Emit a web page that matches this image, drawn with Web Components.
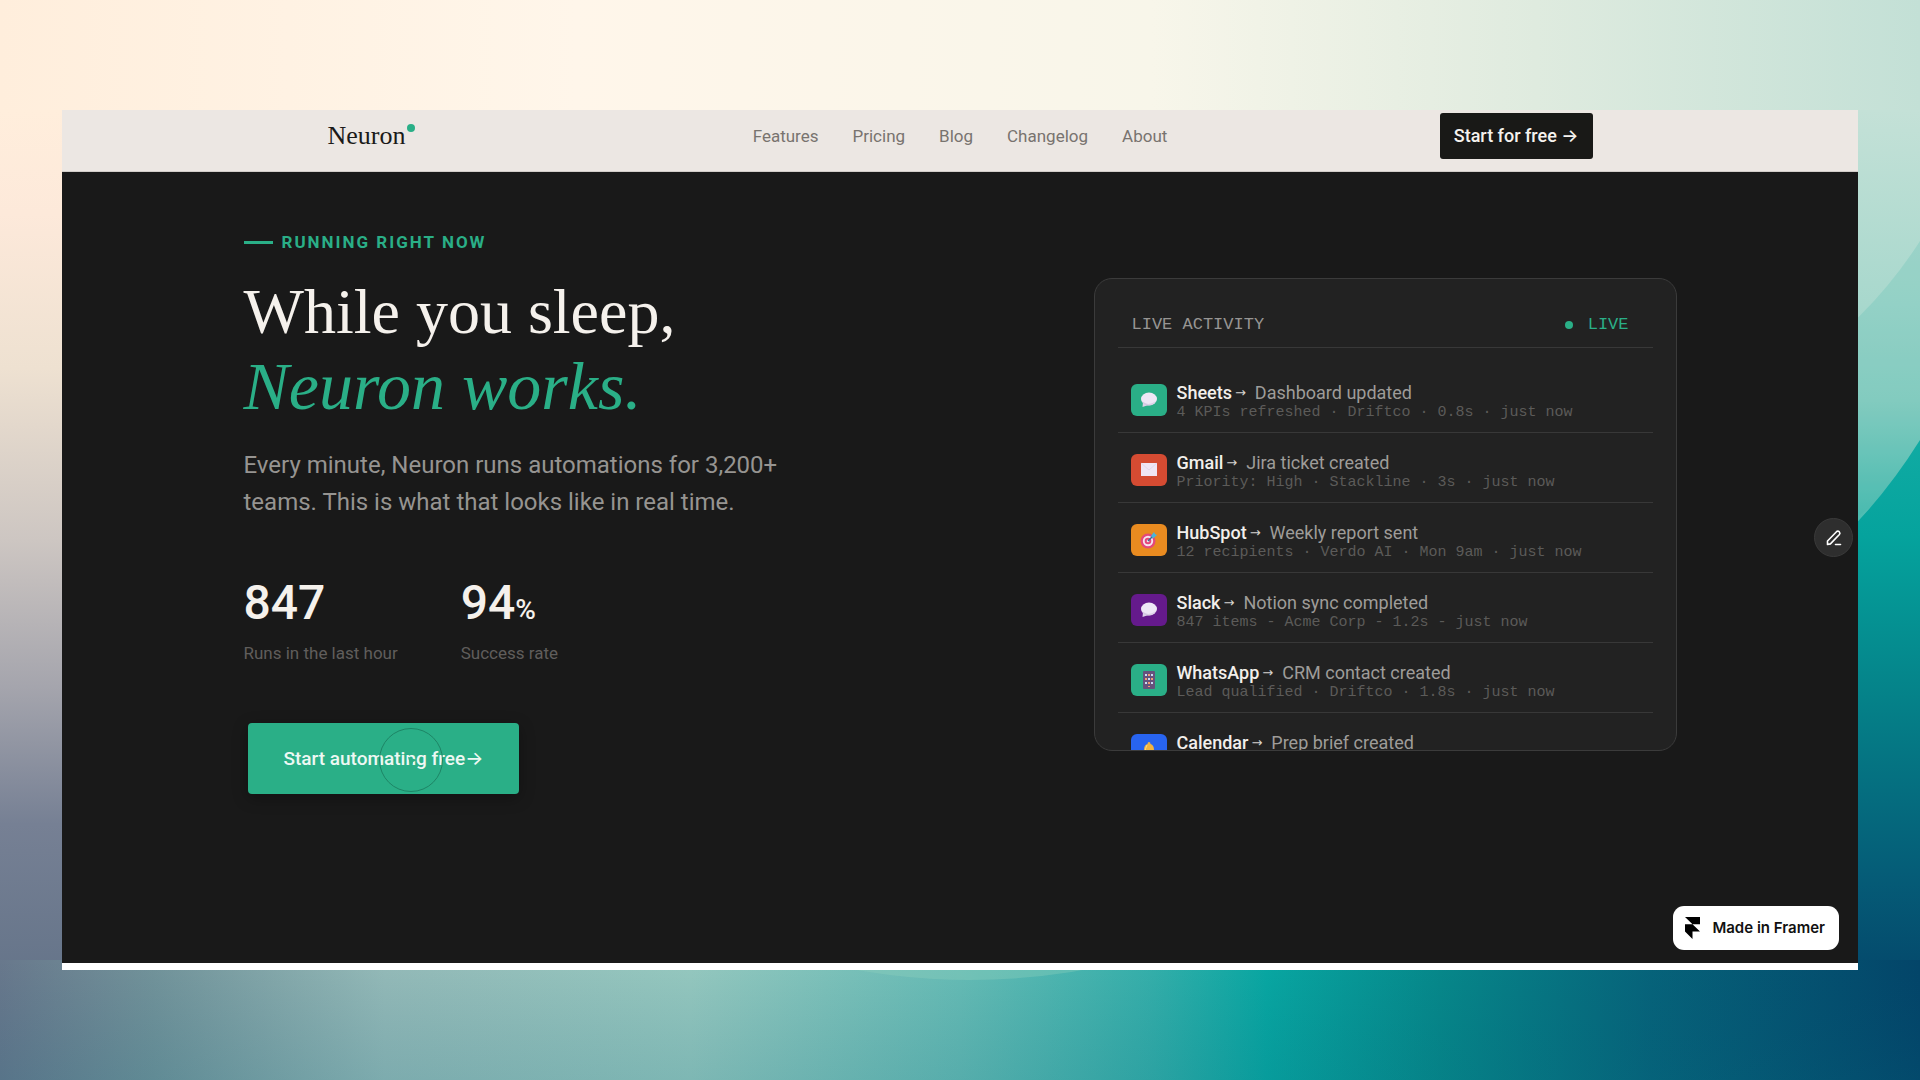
<!DOCTYPE html>
<html lang="en">
<head>
<meta charset="utf-8">
<meta name="viewport" content="width=device-width, initial-scale=1">
<title>Neuron</title>
<style>
  :root{ --ink:#191919; --paper:#ece7e3; --green:#2aaf87; --line:#383838; --sans:Roboto, Inter, sans-serif; --serif:"Liberation Serif", serif; --mono:"Liberation Mono", monospace; }
  body{ margin:0; font-family:var(--sans); }
</style>
</head>
<body>
<nr-stage>
  <nr-nav>
    <a href="#features">Features</a>
    <a href="#pricing">Pricing</a>
    <a href="#blog">Blog</a>
    <a href="#changelog">Changelog</a>
    <a href="#about">About</a>
    <button slot="action" type="button">Start for free →</button>
  </nr-nav>
  <nr-hero>
    <nr-pitch>
      <span slot="eyebrow">RUNNING RIGHT NOW</span>
      <span slot="title">While you sleep,</span>
      <em slot="title">Neuron works.</em>
      <span slot="lead">Every minute, Neuron runs automations for 3,200+ teams. This is what that looks like in real time.</span>
      <nr-stat slot="stats" value="847" label="Runs in the last hour"></nr-stat>
      <nr-stat slot="stats" value="94" unit="%" label="Success rate"></nr-stat>
      <nr-cta slot="action">Start automating free→</nr-cta>
    </nr-pitch>
    <nr-activity>
      <nr-run app="Sheets" action="Dashboard updated" icon="chat" style="--tile:#2aaf87">4 KPIs refreshed · Driftco · 0.8s · just now</nr-run>
      <nr-run app="Gmail" action="Jira ticket created" icon="mail" style="--tile:#d54b32">Priority: High · Stackline · 3s · just now</nr-run>
      <nr-run app="HubSpot" action="Weekly report sent" icon="target" style="--tile:#e98b20">12 recipients · Verdo AI · Mon 9am · just now</nr-run>
      <nr-run app="Slack" action="Notion sync completed" icon="chat" style="--tile:#651a8c">847 items - Acme Corp - 1.2s - just now</nr-run>
      <nr-run app="WhatsApp" action="CRM contact created" icon="phone" style="--tile:#2aaf87">Lead qualified · Driftco · 1.8s · just now</nr-run>
      <nr-run app="Calendar" action="Prep brief created" icon="bell" style="--tile:#2864f0"></nr-run>
    </nr-activity>
  </nr-hero>
  <nr-edit slot="overlay"></nr-edit>
  <nr-badge slot="overlay">Made in Framer</nr-badge>
</nr-stage>

<script>
const define = (name, html) => customElements.define(name, class extends HTMLElement {
  constructor(){
    super();
    this.attachShadow({ mode: 'open' }).innerHTML = typeof html === 'function' ? html(this) : html;
  }
});

// wallpaper plus the framed page
define('nr-stage', `
  <style>
    :host{ display:flex; box-sizing:border-box; min-height:100vh; padding:110px 62px; position:relative; isolation:isolate; }
    .wall{ position:absolute; inset:0; width:100%; height:100%; z-index:-1; }
    main{ flex:1; display:flex; flex-direction:column; position:relative; background:var(--ink); border-bottom:7px solid #fff; min-width:0; }
    ::slotted(nr-hero){ flex:1; }
  </style>
  <svg class="wall" viewBox="0 0 1920 1080" preserveAspectRatio="none" aria-hidden="true">
    <defs>
      <linearGradient id="top"><stop offset="0" stop-color="#ffeedc"/><stop offset=".3" stop-color="#fff6ea"/><stop offset=".6" stop-color="#f8f6ea"/><stop offset=".8" stop-color="#dfebdf"/><stop offset="1" stop-color="#c3e0d6"/></linearGradient>
      <linearGradient id="left" x1="0" y1="0" x2="0" y2="1"><stop offset="0" stop-color="#ffeedc"/><stop offset=".12" stop-color="#fde9da"/><stop offset=".3" stop-color="#eee1d1"/><stop offset=".5" stop-color="#cdc6c2"/><stop offset=".67" stop-color="#a5a5ad"/><stop offset=".83" stop-color="#768094"/><stop offset="1" stop-color="#66758a"/></linearGradient>
      <linearGradient id="right" x1="0" y1="0" x2="0" y2="1"><stop offset="0" stop-color="#c4e1d7"/><stop offset=".2" stop-color="#a8d8cd"/><stop offset=".3" stop-color="#93d1c5"/><stop offset=".42" stop-color="#4dbdb2"/><stop offset=".5" stop-color="#3fb8ae"/></linearGradient>
      <linearGradient id="deep" x1="0" y1="0" x2="0" y2="1"><stop offset="0" stop-color="#10aba3"/><stop offset=".15" stop-color="#05a39d"/><stop offset=".4" stop-color="#058289"/><stop offset=".68" stop-color="#055c77"/><stop offset=".82" stop-color="#044b6d"/><stop offset="1" stop-color="#03456a"/></linearGradient>
      <linearGradient id="bottom"><stop offset="0" stop-color="#68788c"/><stop offset=".08" stop-color="#72939a"/><stop offset=".2" stop-color="#94bab8"/><stop offset=".36" stop-color="#95c8bf"/><stop offset=".5" stop-color="#66bcb5"/><stop offset=".6" stop-color="#34afaa"/><stop offset=".66" stop-color="#08a7a2"/><stop offset=".75" stop-color="#06888a"/><stop offset=".86" stop-color="#06637a"/><stop offset="1" stop-color="#034569"/></linearGradient>
      <linearGradient id="shade" x1="0" y1="0" x2="0" y2="1"><stop offset="0" stop-color="#03456a" stop-opacity="0"/><stop offset="1" stop-color="#03607a" stop-opacity=".16"/></linearGradient>
    </defs>
    <rect width="1920" height="1080" fill="url(#top)"/>
    <rect y="110" width="100" height="860" fill="url(#left)"/>
    <rect x="1800" y="110" width="120" height="970" fill="url(#right)"/>
    <path d="M1800 365Q1872 316 1920 241V470L1800 560Z" fill="#35afa6" opacity=".18"/>
    <path d="M1800 575Q1870 520 1920 440V1080H1800Z" fill="url(#deep)"/>
    <rect y="960" width="1920" height="120" fill="url(#bottom)"/>
    <rect y="960" width="1920" height="120" fill="url(#shade)"/>
    <path d="M810 960Q970 1000 1130 960Z" fill="#8fd0bd" opacity=".35"/>
  </svg>
  <main><slot></slot><slot name="overlay"></slot></main>`);

define('nr-nav', `
  <style>
    :host{ display:block; background:var(--paper); border-bottom:1px solid #d2cdc9; }
    nav{ display:grid; grid-template-columns:1fr auto 1fr; align-items:center; width:calc(100% - 32px); max-width:1265px; margin:0 auto; padding:3px 0 12px; }
    .logo{ display:flex; align-items:flex-start; gap:2px; justify-self:start; color:#1b1a19; text-decoration:none; font:26px/30px var(--serif); }
    .logo i{ width:8px; height:8px; border-radius:50%; background:var(--green); margin-top:3px; }
    .links{ display:flex; gap:34px; }
    ::slotted(a){ color:#78736f; text-decoration:none; font-size:17px; line-height:24px; }
    ::slotted(button){ justify-self:end; height:46px; padding:0 14px; border:0; border-radius:3px; background:#191917; color:#f5f2ee; font:500 18px/24px var(--sans); cursor:pointer; }
  </style>
  <nav><a class="logo" href="#">Neuron<i></i></a><div class="links"><slot></slot></div><slot name="action"></slot></nav>`);

define('nr-hero', `
  <style>
    :host{ display:flex; justify-content:space-between; align-items:flex-start; box-sizing:border-box; width:calc(100% - 32px); max-width:1433px; margin:0 auto; padding:57px 0 48px; }
    ::slotted(nr-activity){ flex:0 1 583px; box-sizing:border-box; margin-top:49px; }
  </style>
  <slot></slot>`);

define('nr-pitch', `
  <style>
    :host{ display:block; }
    .eyebrow{ display:flex; align-items:center; gap:9px; margin:0; color:var(--green); font-size:17px; line-height:26px; font-weight:700; letter-spacing:2px; }
    .eyebrow::before{ content:""; width:29px; height:3px; background:currentColor; }
    h1{ display:flex; flex-direction:column; margin:20px 0 0; color:#f5f1ec; font:64px/74px var(--serif); }
    ::slotted(em){ color:var(--green); font-size:68px; font-style:italic; }
    .lead{ max-width:560px; margin:24px 0 0; color:#969491; font-size:24px; line-height:37px; }
    .stats{ display:flex; gap:63px; margin-top:54px; }
    .action{ margin:58px 0 0 4px; }
  </style>
  <p class="eyebrow"><slot name="eyebrow"></slot></p>
  <h1><slot name="title"></slot></h1>
  <p class="lead"><slot name="lead"></slot></p>
  <div class="stats"><slot name="stats"></slot></div>
  <div class="action"><slot name="action"></slot></div>`);

define('nr-stat', el => `
  <style>
    :host{ display:block; }
    .value{ margin:0; color:#f5f1ec; font-size:48px; line-height:56px; font-weight:500; }
    small{ font-size:28px; }
    .label{ margin:3px 0 0; color:#605e5c; font-size:17px; line-height:24px; }
  </style>
  <p class="value">${el.getAttribute('value')}<small>${el.getAttribute('unit') ?? ''}</small></p>
  <p class="label">${el.getAttribute('label')}</p>`);

// the ring is the pointer resting on the button
define('nr-cta', `
  <style>
    :host{ display:inline-block; }
    button{ position:relative; height:71px; padding:0 36px; border:0; border-radius:4px; background:var(--green); color:#edf8f3; box-shadow:0 4px 16px rgba(0,0,0,.3); font:500 19px/28px var(--sans); cursor:pointer; }
    svg{ position:absolute; left:130px; top:4px; }
  </style>
  <button type="button"><slot></slot>
    <svg width="66" height="66" viewBox="0 0 66 66" fill="none" aria-hidden="true"><circle cx="33" cy="33" r="31.5" stroke="#1e8566"/><path d="M30 30l9 3-4 2-2 5z" fill="#2aaf87"/></svg>
  </button>`);

define('nr-activity', `
  <style>
    :host{ display:block; max-height:473px; overflow:hidden; padding:0 23px; border:1px solid #3b3b3b; border-radius:18px; background:#222; }
    header{ display:flex; justify-content:space-between; padding:35px 24px 11px 14px; border-bottom:1px solid var(--line); margin-bottom:15px; font:17px/22px var(--mono); color:#979593; }
    h2{ margin:0; font:inherit; }
    .live{ display:flex; align-items:center; gap:15px; color:var(--green); }
    .live::before{ content:""; width:8px; height:8px; border-radius:50%; background:currentColor; }
  </style>
  <header><h2>LIVE ACTIVITY</h2><span class="live">LIVE</span></header>
  <slot></slot>`);

const icons = {
  chat: '<ellipse cx="9" cy="8" rx="8" ry="6.5" fill="#eee7f6"/><path d="M3 11l-.5 5 6-2z" fill="#ddd2e9"/><path d="M2 10q6 6 14 0-3 5-8 4.5-4 0-6-4.5z" fill="#cfc2dc" opacity=".6"/>',
  mail: '<path d="M1 2h16v13H1z" fill="#f0e5f4"/><path d="M1 2l8 7 8-7" fill="none" stroke="#e3d7ec"/>',
  target: '<circle cx="8" cy="10" r="7.5" fill="#e4487b"/><circle cx="8" cy="10" r="5.2" fill="#f5e5ef"/><circle cx="8" cy="10" r="3.3" fill="#e4487b"/><circle cx="8" cy="10" r="1.3" fill="#f5e5ef"/><path d="M8 10l6-6" stroke="#376b94" stroke-width="1.5"/><path d="M11 5l3-4 1 2 2 1-4 3.5z" fill="#46b5dc"/>',
  phone: '<rect x="3" y="0" width="12" height="18" rx="1" fill="#66517c"/><g fill="#c9dcf2"><path d="M5 3h2v2H5zM11 3h2v2h-2zM8 7h2v2H8zM5 11h2v2H5zM11 11h2v2h-2z"/></g><g fill="#f29a72"><path d="M8 3h2v2H8zM5 7h2v2H5zM11 7h2v2h-2zM8 11h2v2H8zM8 15h2v1H8z"/></g>',
  bell: '<path d="M9 1q1.5 0 1.5 2 3.5 1 3.5 6 0 4 3 6H1q3-2 3-6 0-5 3.5-6 0-2 1.5-2z" fill="#f4b43f"/><path d="M7 4q-2 3-2 9" stroke="#ffdb85" fill="none"/>'
};

define('nr-run', el => `
  <style>
    :host{ display:flex; gap:10px; box-sizing:border-box; height:70px; padding:21px 0 0 13px; border-bottom:1px solid var(--line); }
    .tile{ display:grid; place-items:center; flex:none; width:36px; height:32px; border-radius:6px; background:var(--tile); }
    p{ margin:0; white-space:nowrap; }
    .title{ display:flex; color:#9e9c99; font-size:18px; line-height:18px; }
    b{ color:#f2efeb; font-weight:500; }
    .title span{ margin:0 9px 0 3px; color:#d5d2cf; font:13px/18px "DejaVu Sans", sans-serif; }
    .meta{ color:#5c5b59; font:15px/22px var(--mono); }
  </style>
  <div class="tile"><svg width="18" height="18" viewBox="0 0 18 18" aria-hidden="true">${icons[el.getAttribute('icon')]}</svg></div>
  <div>
    <p class="title"><b>${el.getAttribute('app')}</b><span>→</span>${el.getAttribute('action')}</p>
    <p class="meta"><slot></slot></p>
  </div>`);

define('nr-edit', `
  <style>
    :host{ position:absolute; right:5px; top:408px; }
    button{ display:grid; place-items:center; width:39px; height:39px; padding:0; border:1px solid #3a3a3a; border-radius:50%; background:#2e2e2e; cursor:pointer; }
  </style>
  <button type="button" aria-label="Edit page"><svg width="18" height="18" viewBox="0 0 18 18" fill="none" stroke="#fff" stroke-width="1.6" stroke-linecap="round" stroke-linejoin="round"><path d="M2.500 15.500v-3.500l9-9.300q1.300-1.200 2.700 0 1.400 1.400.2 2.800l-9 9.400z"/><path d="M10.500 15.500h5"/></svg></button>`);

define('nr-badge', `
  <style>
    :host{ position:absolute; right:19px; bottom:13px; }
    a{ display:flex; align-items:center; gap:12px; height:44px; padding:0 14px 0 12px; border-radius:11px; background:#fff; color:#111; font:600 15px/20px Inter, sans-serif; text-decoration:none; }
  </style>
  <a href="#framer"><svg width="15" height="22" viewBox="0 0 15 22" aria-hidden="true"><path d="M0 0h15v7.3H7.5zM0 7.3h7.5l7.5 7.3H7.5V22L0 14.6z"/></svg><span><slot></slot></span></a>`);
</script>
</body>
</html>
